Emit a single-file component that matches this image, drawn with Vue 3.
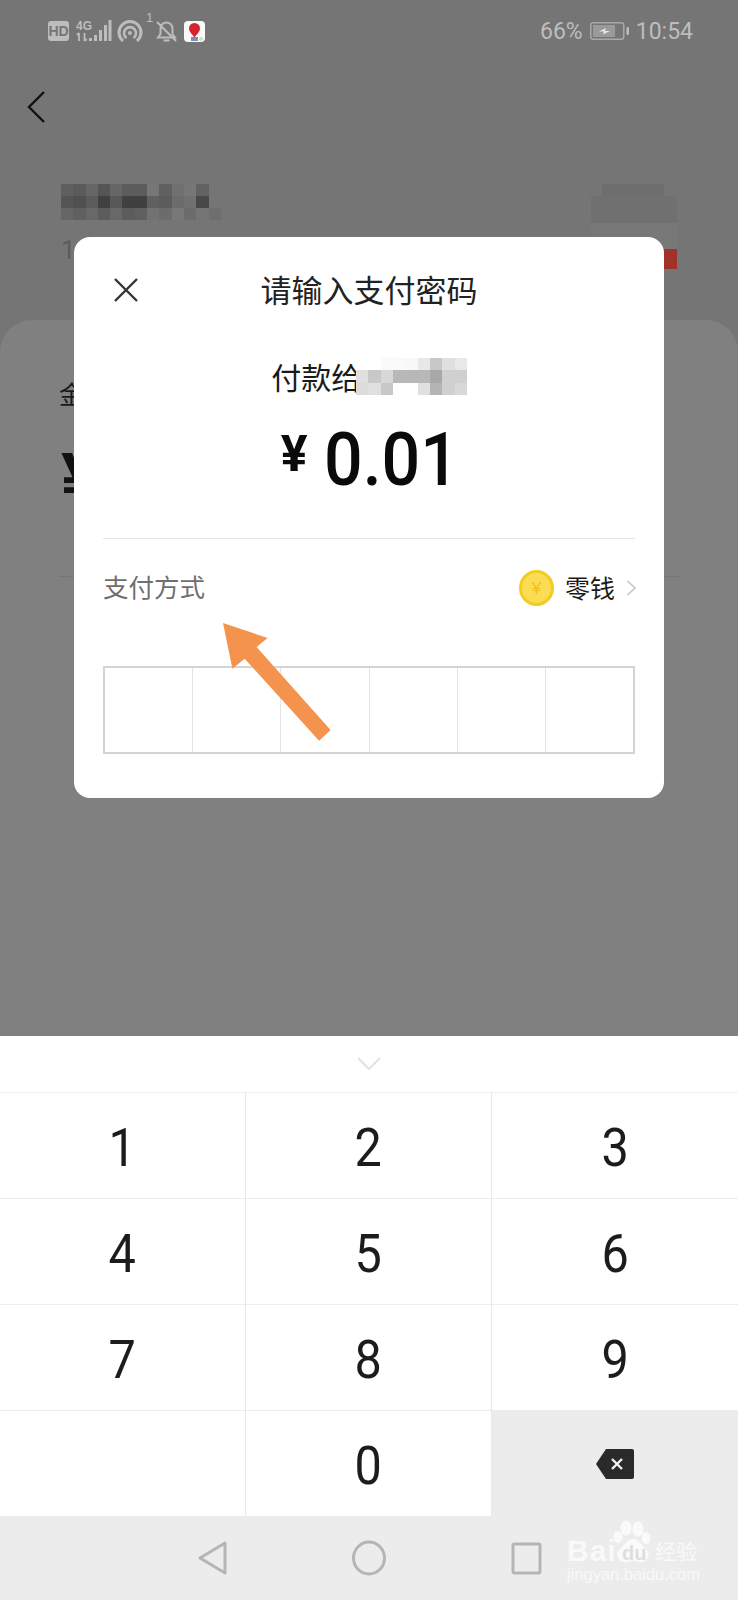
<script setup>
const keys = ['1', '2', '3', '4', '5', '6', '7', '8', '9', '', '0', 'del']

// pixel blocks hiding the name, row by row
const nameBlocks = [
  '#5f5f5f', '#5a5a5a', '#666', '#555', '#666', '#5c5c5c', '#5c5c5c', '#777', '#606060', '#707070', '#777', '#626262', '#757575',
  '#555', '#505050', '#5c5c5c', '#404040', '#585858', '#404040', '#404040', '#606060', '#5c5c5c', '#6c6c6c', '#707070', '#484848', '#757575',
  '#666', '#606060', '#686868', '#5c5c5c', '#686868', '#5c5c5c', '#606060', '#727272', '#6c6c6c', '#787878', '#6c6c6c', '#757575', '#6e6e6e'
]
const payeeBlocks = [
  '#fff', '#fff', '#fafafa', '#fafafa', '#f8f8f8', '#e8e8e8', '#c8c8c8', '#e0e0e0', '#e8e8e8',
  '#e0e0e0', '#c8c8c8', '#d8d8d8', '#b8b8b8', '#b8b8b8', '#b8b8b8', '#a8a8a8', '#d0d0d0', '#d0d0d0',
  '#dcdcdc', '#e0e0e0', '#c8c8c8', '#fff', '#fff', '#e0e0e0', '#b4b4b4', '#d0d0d0', '#d8d8d8'
]
const cells = [1, 2, 3, 4, 5, 6]
</script>

<template>
  <div class="screen">
    <div class="page">
      <div class="status">
        <svg class="status-icons" width="160" height="34" viewBox="0 0 160 34">
          <rect x="0" y="11" width="21" height="20" rx="3" fill="#bdbdbd" />
          <text x="10.5" y="26" class="hd">HD</text>
          <text x="28" y="19.500" class="net">4G</text>
          <path d="M31 23v8M29 25l2-2M36.500 23v8M36.500 31l2-2" stroke="#bdbdbd" stroke-width="1.800" fill="none" />
          <path d="M41 28h3v3h-3zM46 25h3v6h-3zM51 20h3v11h-3zM56 15h3v16h-3zM60.500 10h3v21h-3z" fill="#bdbdbd" />
          <path d="M75 31a11 11 0 1 1 14 0" stroke="#bdbdbd" stroke-width="3" fill="none" />
          <path d="M78.500 28a6 6 0 1 1 7 0" stroke="#bdbdbd" stroke-width="2.600" fill="none" />
          <circle cx="82" cy="23" r="2" fill="#bdbdbd" />
          <text x="98" y="12" class="sup">1</text>
          <path d="M110 27.500h17l-2.500-3.500v-5.500a6 6 0 0 0-12 0v5.500zM115.500 30.500h6M109 12l19 19" stroke="#bdbdbd" stroke-width="2" fill="none" />
          <rect x="136" y="11" width="21" height="21" rx="4" fill="#fafafa" />
          <path d="M146.500 13a5.500 5.500 0 0 1 5.500 5.500c0 3.500-3.500 6-5.500 9-2-3-5.500-5.500-5.500-9a5.500 5.500 0 0 1 5.500-5.500z" fill="#d8232f" />
          <rect x="143" y="27" width="7" height="4" fill="#7d8db0" />
          <circle cx="153" cy="29" r="2" fill="#cfe0b0" />
        </svg>
        <div class="status-right">
          <span>66%</span>
          <svg width="39" height="18" viewBox="0 0 39 18">
            <rect x="0.750" y="0.750" width="33" height="16.500" rx="2.500" fill="none" stroke="#a8a8a8" stroke-width="1.500" />
            <rect x="3" y="3" width="22" height="12" fill="#9a9a9a" />
            <path d="M9 9.500l7-3.500-1 3h5l-7 3.500 1-3z" fill="#e8e8e8" />
            <rect x="36.500" y="5" width="2.500" height="8" rx="1" fill="#bdbdbd" />
          </svg>
          <span>10:54</span>
        </div>
      </div>

      <div class="back-row">
        <svg width="20" height="34" viewBox="0 0 20 34">
          <path d="M18 2L3 17l15 15" fill="none" stroke="#111" stroke-width="2.400" />
        </svg>
      </div>

      <div class="shop-row">
        <div class="shop-info">
          <div class="mosaic name-mosaic">
            <i v-for="(c, i) in nameBlocks" :key="i" :style="{ background: c }"></i>
          </div>
          <div class="shop-sub">1</div>
        </div>
        <div class="shop-thumb">
          <div class="thumb-top"></div>
          <div class="thumb-mid"></div>
          <div class="thumb-bottom"></div>
          <div class="thumb-red"></div>
        </div>
      </div>

      <div class="sheet">
        <div class="sheet-label">金额</div>
        <div class="sheet-yen">¥</div>
        <div class="sheet-line"></div>
      </div>
    </div>

    <div class="keyboard">
      <div class="kb-handle">
        <svg width="24" height="13" viewBox="0 0 24 13">
          <path d="M1 1l11 11L23 1" fill="none" stroke="#e2e2e2" stroke-width="2" />
        </svg>
      </div>
      <div class="keys">
        <div v-for="k in keys" :key="k" class="key" :class="{ 'key-del': k === 'del' }">
          <svg v-if="k === 'del'" width="38" height="30" viewBox="0 0 38 30">
            <path d="M10 0h26a2 2 0 0 1 2 2v26a2 2 0 0 1-2 2H10L0 15z" fill="#2a2a2a" />
            <path d="M16 10l10 10M26 10L16 20" stroke="#f2f2f2" stroke-width="2.400" />
          </svg>
          <span v-else>{{ k }}</span>
        </div>
      </div>
    </div>

    <div class="navbar">
      <svg width="34" height="36" viewBox="0 0 34 36">
        <path d="M30 3v30L5 18z" fill="none" stroke="#b5b5b5" stroke-width="3" stroke-linejoin="round" />
      </svg>
      <svg width="34" height="36" viewBox="0 0 34 36">
        <ellipse cx="17" cy="18" rx="15.500" ry="16" fill="none" stroke="#b5b5b5" stroke-width="3" />
      </svg>
      <svg width="34" height="36" viewBox="0 0 34 36">
        <rect x="4" y="4" width="27" height="29" rx="1.500" fill="none" stroke="#b5b5b5" stroke-width="3" />
      </svg>
    </div>

    <div class="modal">
      <div class="modal-head">
        <svg width="24" height="24" viewBox="0 0 24 24">
          <path d="M1 1l22 22M23 1L1 23" stroke="#333" stroke-width="2.400" />
        </svg>
        <div class="modal-title">请输入支付密码</div>
      </div>

      <div class="payee">
        <span>付款给</span>
        <div class="mosaic payee-mosaic">
          <i v-for="(c, i) in payeeBlocks" :key="i" :style="{ background: c }"></i>
        </div>
      </div>

      <div class="amount">
        <span class="amount-yen">¥</span>
        <span class="amount-num">0.01</span>
      </div>

      <div class="method">
        <span class="method-label">支付方式</span>
        <div class="method-value">
          <svg width="35" height="36" viewBox="0 0 35 36">
            <ellipse cx="17.500" cy="18" rx="16" ry="16.500" fill="#fbdd55" stroke="#f2cd20" stroke-width="3" />
            <text x="17.500" y="24" class="coin-yen">¥</text>
          </svg>
          <span class="method-name">零钱</span>
          <svg class="method-chevron" width="11" height="16" viewBox="0 0 11 16">
            <path d="M1.500 1l7.500 7-7.500 7" fill="none" stroke="#c4c4c4" stroke-width="1.600" />
          </svg>
        </div>
      </div>

      <div class="pin">
        <div v-for="c in cells" :key="c" class="pin-cell"></div>
      </div>
    </div>

    <svg class="arrow" width="738" height="800" viewBox="0 0 738 800">
      <path d="M223 623l44.600 15-11 9 74 83-11.500 10.700-74.400-82-12.300 10z" fill="#f4934d" />
    </svg>

    <div class="watermark">
      <svg class="paw" width="40" height="46" viewBox="0 0 40 46">
        <ellipse cx="6" cy="17" rx="4.500" ry="6" fill="#fafafa" />
        <ellipse cx="14" cy="8" rx="5.500" ry="7.500" fill="#fafafa" />
        <ellipse cx="26" cy="9" rx="5.500" ry="7.500" fill="#fafafa" />
        <ellipse cx="34" cy="18" rx="4.500" ry="6" fill="#fafafa" />
        <path d="M21 19c6 0 8 6 13 10 6 5 1 14-6 13-3 0-5-1-7-1s-4 1-7 1c-7 1-12-8-6-13 5-4 7-10 13-10z" fill="#fafafa" />
      </svg>
      <span class="wm-bai">Bai</span>
      <span class="wm-du">du</span>
      <span class="wm-jy">经验</span>
      <span class="wm-url">jingyan.baidu.com</span>
    </div>
  </div>
</template>

<style>
html, body {
  margin: 0;
  background: #808080;
}
</style>

<style scoped>
.screen {
  position: relative;
  width: 738px;
  height: 1600px;
  display: flex;
  flex-direction: column;
  overflow: hidden;
  font-family: Roboto, "Noto Sans CJK SC", sans-serif;
}

.page {
  flex: 1;
  display: flex;
  flex-direction: column;
  background: #757575;
}

.status {
  height: 60px;
  padding: 10px 45px 0 48px;
  box-sizing: border-box;
  display: flex;
  justify-content: space-between;
  align-items: flex-start;
}
.status-icons text {
  font-family: "Liberation Sans", sans-serif;
  fill: #bdbdbd;
}
.status-icons .hd {
  font-size: 14px;
  font-weight: 700;
  text-anchor: middle;
  fill: #757575;
}
.status-icons .net {
  font-size: 12px;
  font-weight: 700;
}
.status-icons .sup {
  font-size: 13px;
}
.status-right {
  display: flex;
  align-items: center;
  gap: 7px;
  height: 42px;
  font-size: 23px;
  color: #bdbdbd;
}

.back-row {
  height: 64px;
  padding: 30px 0 0 26px;
  box-sizing: border-box;
}
.back-row svg {
  display: block;
}

.shop-row {
  height: 196px;
  padding: 60px 61px 0;
  box-sizing: border-box;
  display: flex;
  justify-content: space-between;
  align-items: flex-start;
}
.mosaic {
  display: grid;
}
.mosaic i {
  display: block;
}
.name-mosaic {
  grid-template-columns: repeat(13, 12.300px);
  grid-auto-rows: 12px;
  filter: blur(0.6px);
}
.shop-sub {
  margin-top: 14px;
  font-size: 26px;
  line-height: 32px;
  color: #5c5c5c;
}
.shop-thumb {
  width: 86px;
  position: relative;
}
.thumb-top {
  height: 12px;
  margin: 0 13px 0 11px;
  background: #6e6e6e;
}
.thumb-mid {
  height: 27px;
  background: #707070;
}
.thumb-bottom {
  height: 26px;
  background: #787878;
}
.thumb-red {
  height: 20px;
  margin-left: 73px;
  background: #a0322a;
}

.sheet {
  flex: 1;
  background: #808080;
  border-radius: 32px 32px 0 0;
  padding: 61px 59px 0;
  position: relative;
}
.sheet-label {
  font-size: 25px;
  line-height: 30px;
  color: #1a1a1a;
}
.sheet-yen {
  margin: 26px 0 0 2px;
  font-size: 70px;
  line-height: 84px;
  font-weight: 700;
  color: #111;
}
.sheet-line {
  margin-top: 55px;
  height: 1px;
  background: #767676;
}

.keyboard {
  background: #fff;
}
.kb-handle {
  height: 55px;
  border-bottom: 1px solid #f0f0f0;
  display: flex;
  justify-content: center;
  align-items: center;
  padding-bottom: 1px;
}
.keys {
  display: grid;
  grid-template-columns: repeat(3, 1fr);
  grid-auto-rows: 106px;
}
.key {
  display: flex;
  align-items: center;
  justify-content: center;
  border-right: 1px solid #e8e8e8;
  border-bottom: 1px solid #ececec;
  box-sizing: border-box;
  font-size: 54px;
  color: #1c1c1c;
}
.key span {
  display: inline-block;
  transform: scaleX(0.9);
  padding-top: 3px;
}
.key:nth-child(3n) {
  border-right: none;
}
.key-del {
  background: #ececec;
}

.navbar {
  height: 83px;
  background: #ececec;
  display: flex;
  justify-content: center;
  gap: 123px;
  padding-top: 23px;
  box-sizing: border-box;
}

.modal {
  position: absolute;
  left: 74px;
  top: 237px;
  width: 590px;
  height: 561px;
  background: #fff;
  border-radius: 16px;
  padding: 0 30px;
  box-sizing: border-box;
}
.modal-head {
  display: flex;
  justify-content: center;
  position: relative;
  padding-top: 36px;
}
.modal-head svg {
  position: absolute;
  left: 10px;
  top: 41px;
}
.modal-title {
  font-size: 31px;
  line-height: 38px;
  color: #222;
}
.payee {
  margin-top: 48px;
  display: flex;
  justify-content: center;
  align-items: flex-start;
  font-size: 30px;
  line-height: 40px;
  color: #1a1a1a;
  height: 40px;
}
.payee-mosaic {
  margin: -1px 0 0 -5px;
  grid-template-columns: repeat(9, 12.300px);
  grid-auto-rows: 12.400px;
  filter: blur(0.5px);
}
.amount {
  margin-top: 20px;
  height: 80px;
  display: flex;
  justify-content: center;
  align-items: center;
  gap: 16px;
  color: #0a0a0a;
  padding-left: 1px;
}
.amount-yen {
  font-size: 50px;
  font-weight: 700;
  margin-top: -10px;
}
.amount-num {
  display: inline-block;
  font-size: 74px;
  font-weight: 500;
  transform: scaleX(0.92);
  transform-origin: left center;
  margin-right: -12px;
}
.method {
  margin: 39px -1px 0;
  border-top: 1px solid #e5e5e5;
  height: 128px;
  box-sizing: border-box;
  padding-top: 30px;
  display: flex;
  justify-content: space-between;
  align-items: flex-start;
}
.method-label {
  font-size: 25.500px;
  line-height: 38px;
  color: #6f6f6f;
}
.method-value {
  display: flex;
  align-items: center;
  height: 38px;
  font-size: 25px;
  color: #1a1a1a;
  gap: 11px;
}
.method-name {
  margin-top: -3px;
}
.method-chevron {
  margin-right: -2px;
}
.coin-yen {
  font-family: "Liberation Sans", sans-serif;
  font-size: 17px;
  text-anchor: middle;
  fill: #eec21a;
}
.pin {
  height: 88px;
  margin: 0 -1px;
  border: 2px solid #d4d4d4;
  box-sizing: border-box;
  display: flex;
}
.pin-cell {
  flex: 1;
  border-right: 1px solid #e4e4e4;
}
.pin-cell:last-child {
  border-right: none;
}

.arrow {
  position: absolute;
  left: 0;
  top: 0;
  pointer-events: none;
}

.watermark {
  position: absolute;
  left: 0;
  top: 0;
  color: #f9f9f9;
  font-family: "Liberation Sans", sans-serif;
}
.watermark span {
  position: absolute;
  white-space: nowrap;
}
.paw {
  position: absolute;
  left: 612px;
  top: 1520px;
}
.wm-bai {
  left: 567px;
  top: 1537px;
  font-size: 30px;
  line-height: 28px;
  font-weight: 700;
  letter-spacing: 1px;
}
.wm-du {
  left: 622px;
  top: 1542px;
  font-size: 20px;
  line-height: 22px;
  font-weight: 700;
  color: #dedede;
}
.wm-jy {
  left: 655px;
  top: 1536px;
  font-family: "Noto Sans CJK SC", sans-serif;
  font-size: 21px;
  line-height: 28px;
}
.wm-url {
  left: 567px;
  top: 1565px;
  font-size: 16.500px;
  line-height: 18px;
}
</style>
